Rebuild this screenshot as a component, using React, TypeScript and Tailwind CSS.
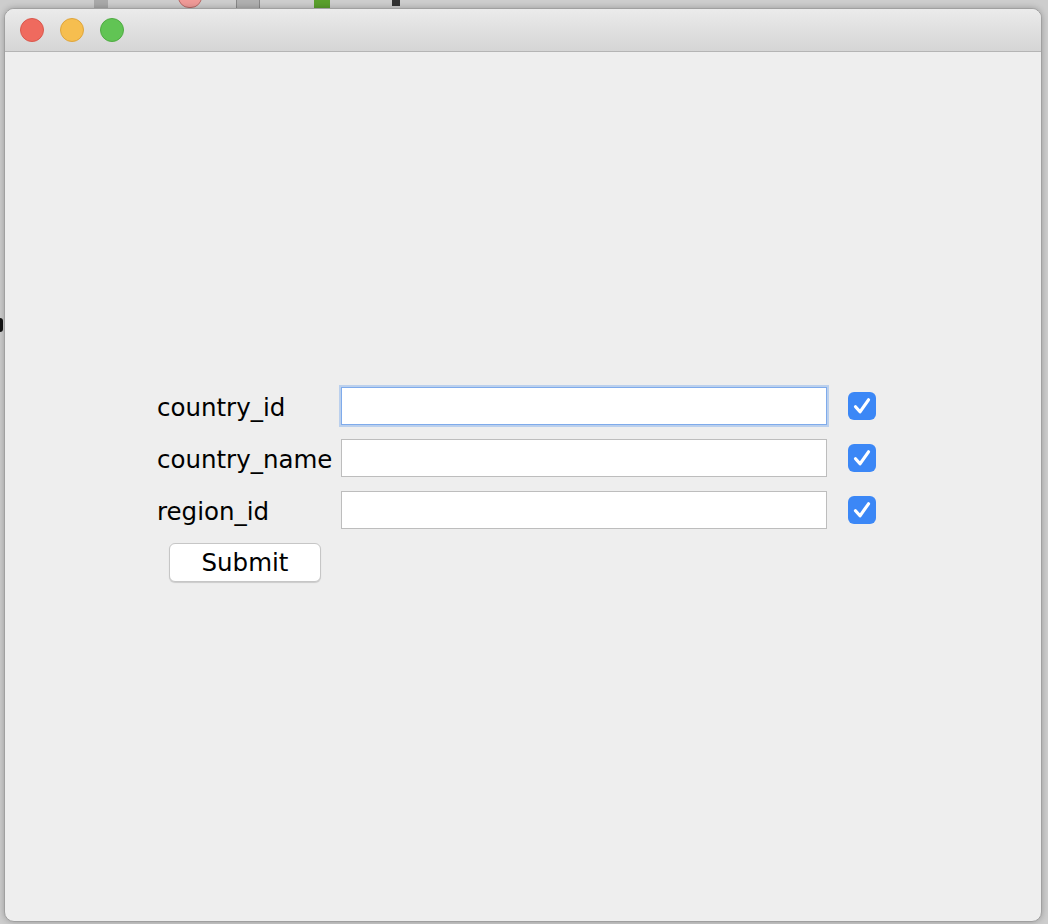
import React from "react";

const fields = [
  { label: "country_id", focused: true },
  { label: "country_name", focused: false },
  { label: "region_id", focused: false },
];

function CheckBox() {
  return (
    <div className="w-[28px] h-[28px] rounded-[6px] bg-[#3b87f6] flex items-center justify-center">
      <svg width="28" height="28" viewBox="0 0 28 28">
        <path
          d="M7.5 14.8 L12 19.8 L20.5 7.8"
          fill="none"
          stroke="white"
          strokeWidth="3.2"
          strokeLinecap="round"
          strokeLinejoin="round"
        />
      </svg>
    </div>
  );
}

export default function App() {
  return (
    <div className="relative w-[1048px] h-[924px] overflow-hidden bg-[#cdcdcd] font-['DejaVu_Sans',sans-serif]">
      {/* blurred desktop bits behind the window */}
      <div className="absolute left-[94px] top-0 w-[14px] h-[8px] bg-[#a9a9a9]" />
      <div className="absolute left-[178px] top-[-14px] w-[24px] h-[22px] rounded-full bg-[#ef9a97] border border-[#b86b68]" />
      <div className="absolute left-[236px] top-0 w-[24px] h-[8px] bg-[#b0b0b0] border-x border-[#888]" />
      <div className="absolute left-[314px] top-0 w-[16px] h-[8px] bg-[#5aa02c]" />
      <div className="absolute left-[392px] top-0 w-[8px] h-[6px] bg-[#333]" />
      <div className="absolute left-0 top-[318px] w-[3px] h-[14px] rounded-r bg-[#111]" />

      {/* window */}
      <div className="absolute left-[4px] top-[8px] w-[1038px] h-[914px] rounded-[10px] overflow-hidden border border-[#a0a0a0] shadow-[0_0_6px_rgba(0,0,0,0.25)] flex flex-col bg-[#eeeeee]">
        <div className="h-[43px] shrink-0 flex items-center gap-[16px] pl-[15px] bg-gradient-to-b from-[#ebebeb] to-[#d5d5d5] border-b border-[#b4b4b4]">
          <div className="w-[24px] h-[24px] rounded-full bg-[#ef6a5e] border border-[#d9584d]" />
          <div className="w-[24px] h-[24px] rounded-full bg-[#f6be4f] border border-[#dea53c]" />
          <div className="w-[24px] h-[24px] rounded-full bg-[#61c454] border border-[#50ab43]" />
        </div>

        <div className="flex-1 pt-[335px] pl-[152px]">
          <div className="grid grid-cols-[184px_486px_49px] gap-y-[14px] items-center">
            {fields.map((f) => (
              <React.Fragment key={f.label}>
                <div className="h-[38px] pt-[4px] text-[24.5px] leading-[34px] text-black whitespace-nowrap">{f.label}</div>
                <div
                  className={
                    f.focused
                      ? "h-[38px] bg-white border border-[#7fabeb] shadow-[0_0_0_2px_rgba(125,170,235,0.45)]"
                      : "h-[38px] bg-white border border-[#bdbdbd]"
                  }
                />
                <div className="pl-[21px]">
                  <CheckBox />
                </div>
              </React.Fragment>
            ))}
            <div className="pl-[12px]">
              <button className="w-[152px] h-[39px] bg-white rounded-[6px] border border-[#c6c6c6] shadow-[0_1px_1px_rgba(0,0,0,0.15)] text-[24.5px] leading-[36px] text-black">
                Submit
              </button>
            </div>
          </div>
        </div>
      </div>
    </div>
  );
}
